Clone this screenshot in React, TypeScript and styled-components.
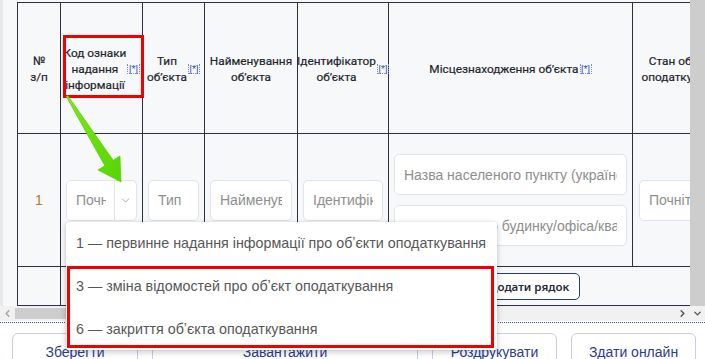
import styled, { createGlobalStyle } from "styled-components"
import { ChevronDown, ChevronLeft, ChevronRight } from "lucide-react"

const Global = createGlobalStyle`
  * { box-sizing: border-box; }
  body {
    margin: 0;
    background: #ffffff;
    font-family: "Liberation Sans", Arial, sans-serif;
  }
`

const columns = "43px 82px 62px 93px 91px 244px 102px"

const Mark = () => <Sup>[*]</Sup>

const App = () => {
    return (
        <Page>
            <Global />
            <Frame>
                <Left>
                    <Viewport>
                        <Grid>
                            <Head>№<br />з/п</Head>
                            <Head>Код ознаки<br />надання<br />інформації<Mark /></Head>
                            <Head>Тип<br />обʼєкта<Mark /></Head>
                            <Head>Найменування<br />обʼєкта</Head>
                            <Head>Ідентифікатор<br />обʼєкта<Mark /></Head>
                            <Head>Місцезнаходження обʼєкта<Mark /></Head>
                            <Head>Стан обʼєкта<br />оподаткування</Head>

                            <Cell><RowNo>1</RowNo></Cell>
                            <Cell>
                                <Select>
                                    <SelectField placeholder="Почніть вводити" readOnly />
                                    <Caret><ChevronDown size={13} strokeWidth={1.4} /></Caret>
                                </Select>
                            </Cell>
                            <Cell><Field placeholder="Тип" readOnly /></Cell>
                            <Cell><Field placeholder="Найменування" readOnly /></Cell>
                            <Cell><Field placeholder="Ідентифікатор" readOnly /></Cell>
                            <Cell>
                                <Stack>
                                    <Field placeholder="Назва населеного пункту (українською)" readOnly />
                                    <Field placeholder="вулиця, номер будинку/офіса/квартири" readOnly />
                                </Stack>
                            </Cell>
                            <Cell $pad={6}><Field placeholder="Почніть вводити" readOnly /></Cell>

                            <AddCell />
                            <AddCell $wide>
                                <AddButton>Додати рядок</AddButton>
                            </AddCell>
                        </Grid>
                    </Viewport>
                    <HBar>
                        <BarArrow $dim><ChevronLeft size={11} strokeWidth={3} /></BarArrow>
                        <HThumb />
                        <HTrack />
                        <BarArrow><ChevronRight size={11} strokeWidth={3} /></BarArrow>
                    </HBar>
                </Left>
                <VBar>
                    <VThumb />
                    <BarArrow><ChevronDown size={11} strokeWidth={3} /></BarArrow>
                </VBar>
            </Frame>
            <Dotted />
            <Actions>
                <Action $w={126}>Зберегти</Action>
                <Action $w={266}>Завантажити</Action>
                <Action $w={125}>Роздрукувати</Action>
                <Action $w={125}>Здати онлайн</Action>
            </Actions>

            <Menu>
                <Option>1 — первинне надання інформації про обʼєкти оподаткування</Option>
                <Option>3 — зміна відомостей про обʼєкт оподаткування</Option>
                <Option>6 — закриття обʼєкта оподаткування</Option>
            </Menu>
            <RedBox $x={63} $y={35} $w={81} $h={63} />
            <RedBox $x={67} $y={266} $w={427} $h={82} />
            <Pointer width="705" height="359" viewBox="0 0 705 359">
                <defs>
                    <linearGradient id="g" x1="0" y1="0" x2="1" y2="1">
                        <stop offset="0" stopColor="#7fe61a" />
                        <stop offset="1" stopColor="#55d600" />
                    </linearGradient>
                </defs>
                <polygon
                    points="67.8,95.5 113.2,160.3 120,156 121,182 98,170 104.8,165.7 66.2,96.5"
                    fill="url(#g)"
                    stroke="#4fc400"
                    strokeWidth="0.6"
                    strokeLinejoin="round"
                />
            </Pointer>
        </Page>
    )
}
export default App

const Page = styled.div`
    position: relative;
    width: 705px;
    height: 359px;
    overflow: hidden;
    background: #ffffff;
`
const Frame = styled.div`
    display: grid;
    grid-template-columns: 690px 15px;
    height: 321px;
`
const Left = styled.div`
    display: flex;
    flex-direction: column;
    min-width: 0;
`
const Viewport = styled.div`
    height: 306px;
    overflow: hidden;
    background: #f7f8fa;
    border-left: 3px solid #e7e8ea;
    padding: 2px 0 0 14px;
`
const Grid = styled.div`
    display: grid;
    grid-template-columns: ${columns};
    grid-template-rows: 131px 133px 39px;
    width: max-content;
    border-top: 1px solid #2c2f3d;
    border-left: 1px solid #2c2f3d;
`
const Head = styled.div`
    display: flex;
    align-items: center;
    justify-content: center;
    text-align: center;
    padding: 2px 1px 0;
    border-right: 1px solid #2c2f3d;
    border-bottom: 1px solid #2c2f3d;
    font-family: Roboto, "Noto Sans", sans-serif;
    font-size: 11.8px;
    font-weight: 400;
    -webkit-text-stroke: 0.2px #23252c;
    line-height: 16px;
    color: #23252c;
    white-space: nowrap;
`
const Sup = styled.sup`
    font-size: 9.5px;
    font-weight: 400;
    -webkit-text-stroke: 0;
    line-height: 9px;
    color: #3b4fc4;
    border: 1px dotted #7d8ad6;
    border-top: 0;
    vertical-align: 6px;
    margin-left: 1px;
    padding: 0 0.5px;
`
const Cell = styled.div<{ $pad?: number }>`
    display: flex;
    align-items: center;
    justify-content: center;
    padding: 0 ${p => p.$pad ?? 5}px;
    border-right: 1px solid #2c2f3d;
    border-bottom: 1px solid #2c2f3d;
    min-width: 0;
`
const AddCell = styled.div<{ $wide?: boolean }>`
    grid-column: ${p => (p.$wide ? "2 / -1" : "auto")};
    display: flex;
    align-items: center;
    padding-left: ${p => (p.$wide ? "417px" : "0")};
    border-right: 1px solid #2c2f3d;
    border-bottom: 1px solid #2c2f3d;
`
const AddButton = styled.button`
    height: 27px;
    width: 102px;
    border: 1px solid #2b3a7d;
    border-radius: 5px;
    background: #ffffff;
    font-family: "Noto Sans", sans-serif;
    font-size: 11.5px;
    font-weight: 600;
    color: #25283a;
    padding: 0;
`
const RowNo = styled.span`
    font-size: 14px;
    color: #b07a26;
`
const Field = styled.input`
    width: 100%;
    height: 41px;
    border: 1px solid #dfe3ea;
    border-radius: 5px;
    background: #ffffff;
    padding: 0 9px;
    font-family: "Liberation Sans", Arial, sans-serif;
    font-size: 14px;
    outline: none;
    &::placeholder { color: #8e8e8e; }
`
const Stack = styled.div`
    display: flex;
    flex-direction: column;
    gap: 10px;
    width: 100%;
`
const Select = styled.div`
    display: flex;
    width: 100%;
    height: 41px;
    border: 1px solid #dfe3ea;
    border-radius: 5px;
    background: #ffffff;
    overflow: hidden;
`
const SelectField = styled.input`
    width: 48px;
    border: 0;
    border-right: 1px solid #dfe3ea;
    padding: 0 8px 0 9px;
    font-family: "Liberation Sans", Arial, sans-serif;
    font-size: 14px;
    outline: none;
    &::placeholder { color: #8e8e8e; }
`
const Caret = styled.div`
    flex: 1;
    display: flex;
    align-items: center;
    justify-content: center;
    color: #8592a6;
`
const HBar = styled.div`
    display: flex;
    height: 15px;
    background: #f1f1f1;
`
const HThumb = styled.div`
    width: 380px;
    margin: 2px 0;
    background: #cdcdcd;
`
const HTrack = styled.div`
    flex: 1;
`
const BarArrow = styled.div<{ $dim?: boolean }>`
    width: 15px;
    height: 15px;
    display: flex;
    align-items: center;
    justify-content: center;
    background: #f1f1f1;
    color: ${p => (p.$dim ? "#a3a3a3" : "#505050")};
`
const VBar = styled.div`
    display: flex;
    flex-direction: column;
`
const VThumb = styled.div`
    flex: 1;
    background: #cdcdcd;
`
const Dotted = styled.div`
    margin-top: 1px;
    border-top: 1px dotted #3653b5;
`
const Actions = styled.div`
    display: flex;
    gap: 14px;
    padding: 10px 0 0 12px;
`
const Action = styled.button<{ $w: number }>`
    flex: none;
    width: ${p => p.$w}px;
    height: 38px;
    border: 1px solid #c9cfe3;
    border-radius: 6px;
    background: #ffffff;
    font-family: "Liberation Sans", Arial, sans-serif;
    font-size: 14px;
    color: #2c3c8e;
`
const Menu = styled.div`
    position: absolute;
    left: 66px;
    top: 222px;
    width: 431px;
    height: 128px;
    display: flex;
    flex-direction: column;
    background: #ffffff;
    border-radius: 2px;
    box-shadow: 0 2px 6px rgba(0, 0, 0, 0.22), 0 0 1px rgba(0, 0, 0, 0.2);
`
const Option = styled.div`
    flex: 1;
    display: flex;
    align-items: center;
    padding-left: 10px;
    font-size: 14.3px;
    color: #575757;
    white-space: nowrap;
`
const RedBox = styled.div<{ $x: number; $y: number; $w: number; $h: number }>`
    position: absolute;
    left: ${p => p.$x}px;
    top: ${p => p.$y}px;
    width: ${p => p.$w}px;
    height: ${p => p.$h}px;
    border: 3px solid #f00000;
`
const Pointer = styled.svg`
    position: absolute;
    left: 0;
    top: 0;
    pointer-events: none;
`
